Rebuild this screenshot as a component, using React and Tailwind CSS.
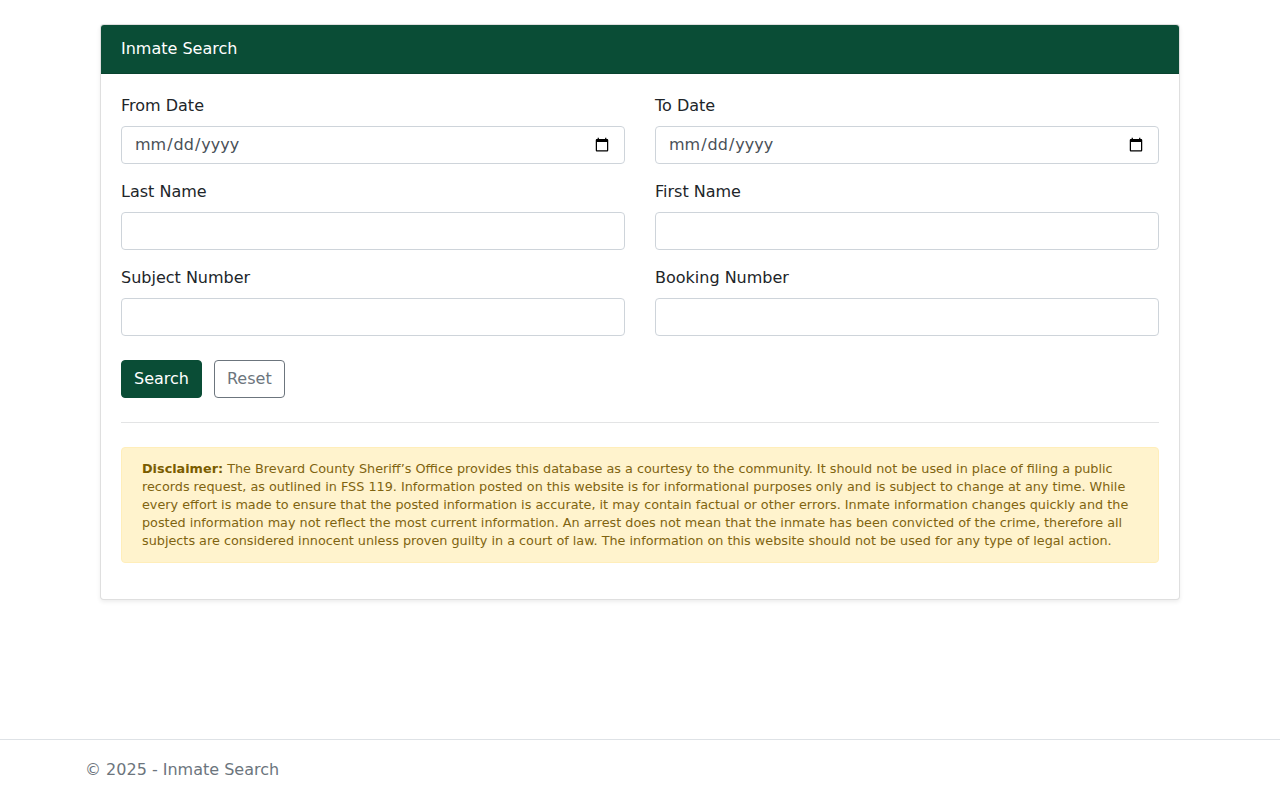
import React from "react";

const Field = ({ label, type = "text" }) => (
  <div className="mb-4 min-w-0">
    <label className="mb-2 block h-6 text-base leading-6 text-[#212529]">{label}</label>
    <input
      type={type}
      className="block h-[38px] w-full rounded border border-[#ced4da] bg-white px-3 py-1.5 text-base leading-6 text-[#495057] outline-none"
    />
  </div>
);

export default function App() {
  return (
    <div className="flex min-h-screen flex-col bg-white font-['DejaVu_Sans',sans-serif] text-base text-[#212529]">
      <main className="mx-auto w-[1080px] pt-6">
        <section className="overflow-hidden rounded border border-[rgba(0,0,0,0.125)] bg-white shadow-[0_2px_4px_rgba(0,0,0,0.075)]">
          <h1 className="bg-[#0a4d36] px-5 py-3 text-base font-normal leading-6 text-white border-b border-[rgba(0,0,0,0.125)]">
            Inmate Search
          </h1>
          <div className="p-5">
            <div className="grid grid-cols-2 gap-x-[30px]">
              <Field label="From Date" type="date" />
              <Field label="To Date" type="date" />
              <Field label="Last Name" />
              <Field label="First Name" />
              <Field label="Subject Number" />
              <Field label="Booking Number" />
            </div>
            <div className="mt-2 flex gap-3">
              <button className="h-[38px] rounded border border-[#0a4d36] bg-[#0a4d36] px-3 text-base leading-6 text-white">
                Search
              </button>
              <button className="h-[38px] rounded border border-[#6c757d] bg-white px-3 text-base leading-6 text-[#6c757d]">
                Reset
              </button>
            </div>
            <hr className="my-6 border-t border-[#e3e4e5]" />
            <div className="mb-4 rounded border border-[#ffeeba] bg-[#fff3cd] px-5 py-3 text-[12.8px] leading-[18px] text-[#806410]">
              <strong className="font-bold text-[#7a5c00]">Disclaimer:</strong> The Brevard County Sheriff’s Office provides this database as a courtesy to the community. It should not be used in place of filing a public records request, as outlined in FSS 119. Information posted on this website is for informational purposes only and is subject to change at any time. While every effort is made to ensure that the posted information is accurate, it may contain factual or other errors. Inmate information changes quickly and the posted information may not reflect the most current information. An arrest does not mean that the inmate has been convicted of the crime, therefore all subjects are considered innocent unless proven guilty in a court of law. The information on this website should not be used for any type of legal action.
            </div>
          </div>
        </section>
      </main>
      <footer className="mt-auto h-[61px] border-t border-[#dee2e6] pl-[85px] text-base leading-[60px] text-[#6c757d]">
        © 2025 - Inmate Search
      </footer>
    </div>
  );
}
